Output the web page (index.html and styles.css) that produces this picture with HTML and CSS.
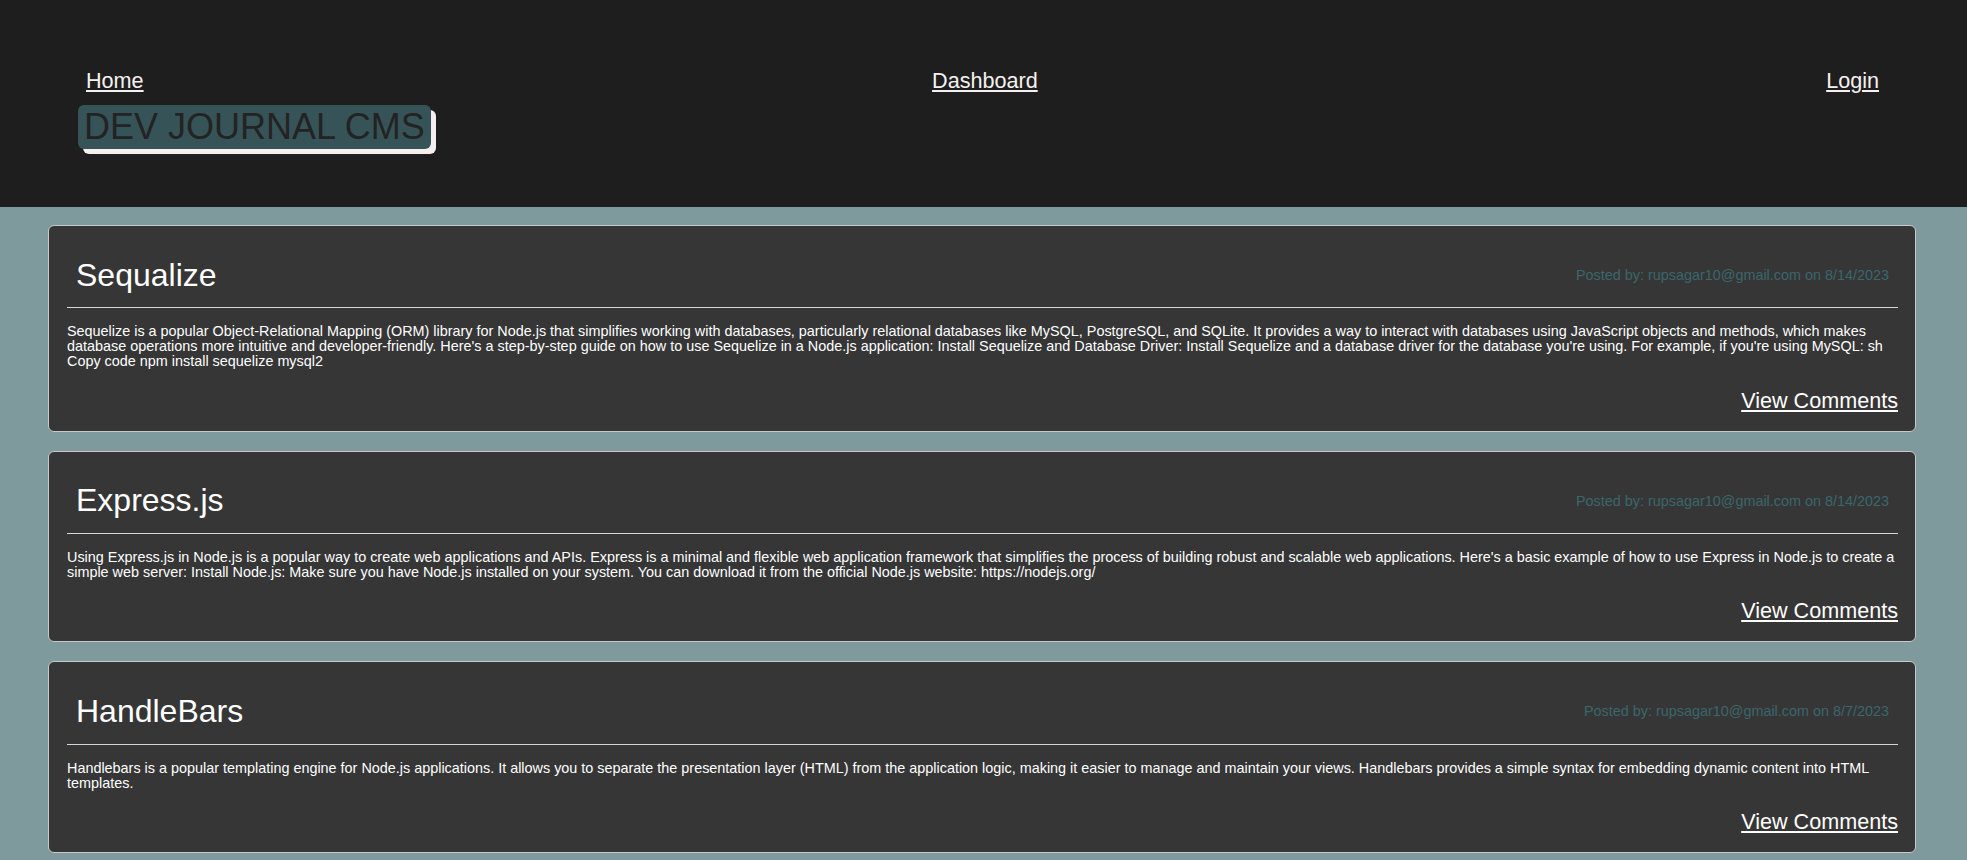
FILE: index.html
```html
<!DOCTYPE html>
<html lang="en">
<head>
<meta charset="utf-8">
<title>Dev Journal CMS</title>
<link rel="stylesheet" href="styles.css">
</head>
<body>
<header class="site-header">
  <nav class="nav">
    <a class="nav-link" href="#">Home</a>
    <a class="nav-link" href="#">Dashboard</a>
    <a class="nav-link" href="#">Login</a>
  </nav>
  <h1 class="brand">DEV JOURNAL CMS</h1>
</header>
<main class="posts">
  <article class="card">
    <div class="card-head">
      <h2 class="card-title">Sequalize</h2>
      <span class="card-meta">Posted by: rupsagar10@gmail.com on 8/14/2023</span>
    </div>
    <hr class="card-rule">
    <p class="card-body">Sequelize is a popular Object-Relational Mapping (ORM) library for Node.js that simplifies working with databases, particularly relational databases like MySQL, PostgreSQL, and SQLite. It provides a way to interact with databases using JavaScript objects and methods, which makes database operations more intuitive and developer-friendly. Here's a step-by-step guide on how to use Sequelize in a Node.js application: Install Sequelize and Database Driver: Install Sequelize and a database driver for the database you're using. For example, if you're using MySQL: sh Copy code npm install sequelize mysql2</p>
    <div class="card-foot"><a class="card-link" href="#">View Comments</a></div>
  </article>
  <article class="card">
    <div class="card-head">
      <h2 class="card-title">Express.js</h2>
      <span class="card-meta">Posted by: rupsagar10@gmail.com on 8/14/2023</span>
    </div>
    <hr class="card-rule">
    <p class="card-body">Using Express.js in Node.js is a popular way to create web applications and APIs. Express is a minimal and flexible web application framework that simplifies the process of building robust and scalable web applications. Here's a basic example of how to use Express in Node.js to create a simple web server: Install Node.js: Make sure you have Node.js installed on your system. You can download it from the official Node.js website: https://nodejs.org/</p>
    <div class="card-foot"><a class="card-link" href="#">View Comments</a></div>
  </article>
  <article class="card">
    <div class="card-head">
      <h2 class="card-title">HandleBars</h2>
      <span class="card-meta">Posted by: rupsagar10@gmail.com on 8/7/2023</span>
    </div>
    <hr class="card-rule">
    <p class="card-body">Handlebars is a popular templating engine for Node.js applications. It allows you to separate the presentation layer (HTML) from the application logic, making it easier to manage and maintain your views. Handlebars provides a simple syntax for embedding dynamic content into HTML templates.</p>
    <div class="card-foot"><a class="card-link" href="#">View Comments</a></div>
  </article>
</main>
</body>
</html>
```
FILE: styles.css
```css
* { box-sizing: border-box; }

html, body {
  margin: 0;
  padding: 0;
}

body {
  background: #7e9a9d;
  font-family: "Liberation Sans", Arial, Helvetica, sans-serif;
  color: #ffffff;
}

.site-header {
  background: #1e1e1e;
  height: 207px;
  padding: 68px 88px 0 78px;
}

.nav {
  display: flex;
  justify-content: space-between;
  align-items: center;
  padding-left: 8px;
}

.nav-link {
  color: #f6f1f1;
  font-size: 21.6px;
  text-decoration: underline;
  line-height: normal;
}

.brand {
  display: inline-block;
  margin: 11px 0 0 0;
  padding: 1px 6px;
  font-size: 36px;
  font-weight: normal;
  line-height: normal;
  color: #232323;
  background: #365457;
  border-radius: 6px;
  box-shadow: 5px 5px 0 #f5efef;
}

.posts {
  padding: 18px 51px 20px 48px;
  display: flex;
  flex-direction: column;
  gap: 19px;
}

.card {
  background: #363636;
  border: 1px solid #c9c9c9;
  border-radius: 6px;
  padding: 18px 17px 17px 18px;
}

.card-head {
  display: flex;
  justify-content: space-between;
  align-items: center;
  padding: 0 9px 0 9px;
  margin-top: 12.5px;
}

.card-title {
  margin: 0;
  font-size: 32px;
  font-weight: normal;
  line-height: normal;
  color: #ffffff;
}

.card-meta {
  font-size: 14.4px;
  color: #3a676c;
}

.card-rule {
  border: 0;
  border-top: 1px solid #d6d6d6;
  margin: 13.7px 0 16px 0;
  height: 0;
}

.card-body {
  margin: 0;
  font-size: 14.4px;
  line-height: 15px;
  color: #ffffff;
}

.card-foot {
  display: flex;
  justify-content: flex-end;
  margin-top: 18.5px;
}

.card-link {
  color: #ffffff;
  font-size: 21.6px;
  line-height: normal;
  text-decoration: underline;
}
```
